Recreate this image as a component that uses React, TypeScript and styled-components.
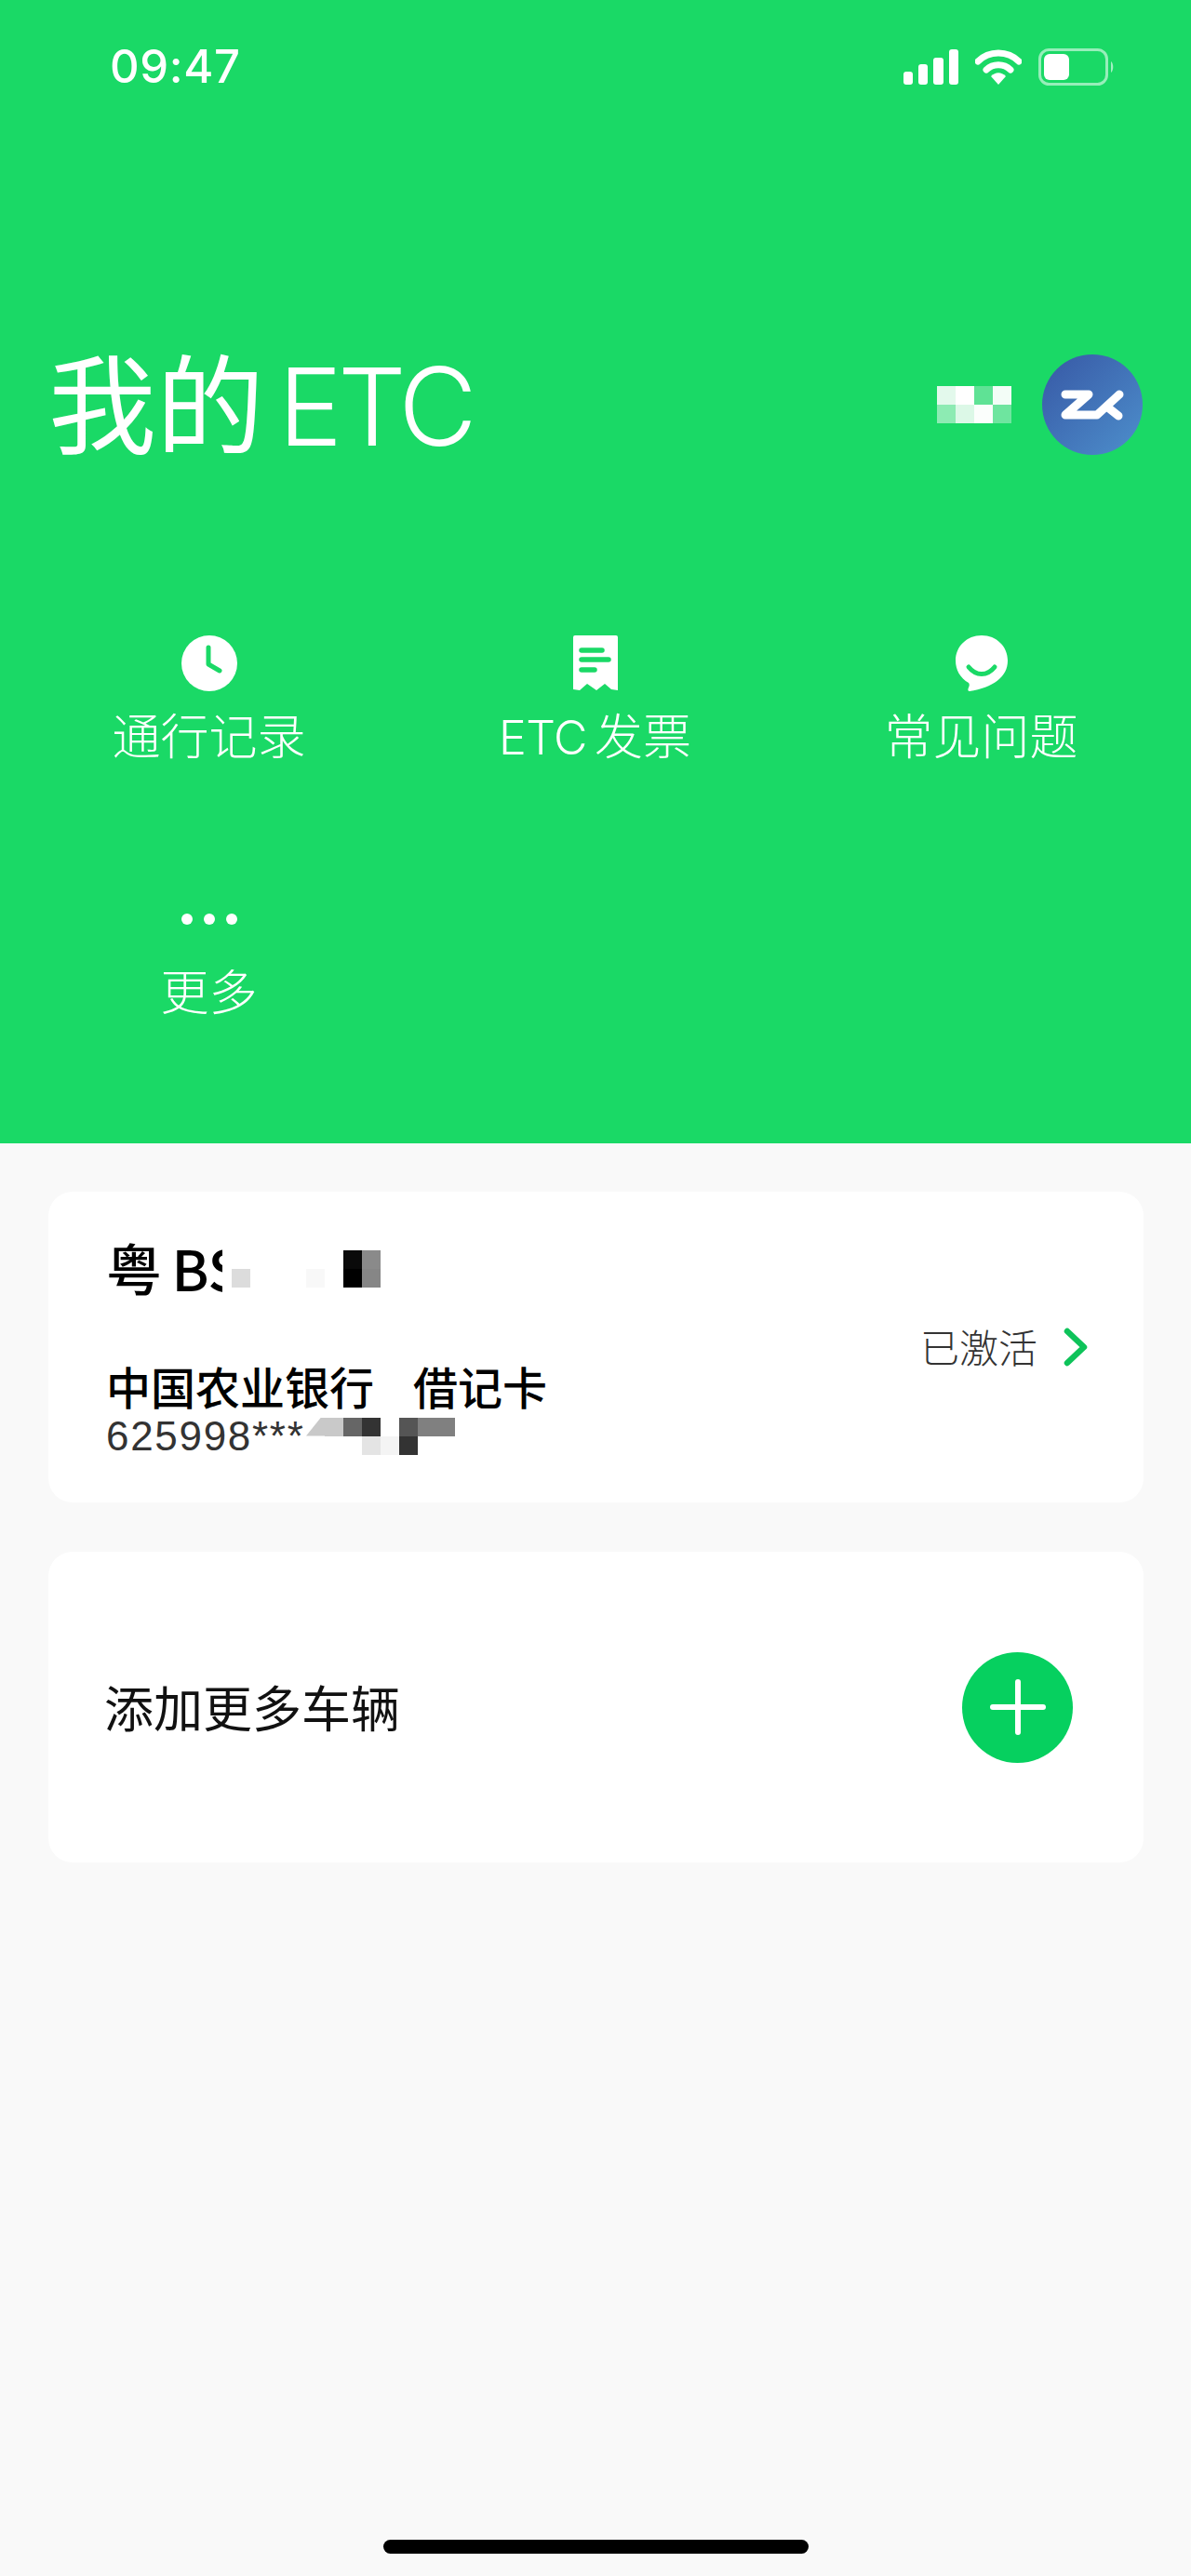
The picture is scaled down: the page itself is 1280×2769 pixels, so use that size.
import React from "react";
import styled, { createGlobalStyle } from "styled-components";

const CJK = `"Inter", "Noto Sans CJK SC", sans-serif`;

const GlobalStyle = createGlobalStyle`
  html, body {
    margin: 0;
    padding: 0;
    background: #f9f9f9;
    font-family: ${CJK};
  }
`;

const Page = styled.div`
  display: flex;
  flex-direction: column;
  min-height: 2769px;
  background: #f9f9f9;
`;

// 상단 초록 영역
const Header = styled.header`
  display: flex;
  flex-direction: column;
  box-sizing: border-box;
  height: 1229px;
  background: #1ad966;
  color: #fff;
`;

const StatusBar = styled.div`
  display: flex;
  justify-content: space-between;
  align-items: center;
  box-sizing: border-box;
  height: 40px;
  margin-top: 52px;
  padding: 0 82px 0 118px;
`;

const Time = styled.span`
  font-family: "Inter", sans-serif;
  font-size: 49px;
  font-weight: 500;
  line-height: 40px;
  letter-spacing: 0.6px;
`;

const StatusIcons = styled.div`
  display: flex;
  align-items: center;
  gap: 18px;
`;

const TitleRow = styled.div`
  display: flex;
  align-items: center;
  justify-content: space-between;
  height: 108px;
  margin-top: 289px;
  padding: 0 52px 0 52px;
`;

const Title = styled.h1`
  margin: 0;
  padding-bottom: 6px;
  font-family: "Noto Sans CJK SC", sans-serif;
  font-size: 116px;
  font-weight: 400;
  line-height: 108px;
  white-space: nowrap;
`;

const TitleLatin = styled.span`
  margin-left: 15px;
  font-family: "Inter", sans-serif;
  font-size: 116px;
  font-weight: 300;
  letter-spacing: -5px;
`;

const Account = styled.div`
  display: flex;
  align-items: center;
  gap: 33px;
`;

const Avatar = styled.div`
  display: flex;
  align-items: center;
  justify-content: center;
  width: 108px;
  height: 108px;
  border-radius: 50%;
  background: linear-gradient(135deg, #3758a5 0%, #4d8fcc 100%);
`;

const Menu = styled.nav`
  display: grid;
  grid-template-columns: repeat(3, 415px);
  row-gap: 133px;
  margin-top: 194px;
  padding-left: 17px;
`;

const MenuItem = styled.a`
  display: flex;
  flex-direction: column;
  align-items: center;
`;

const MenuIcon = styled.div`
  display: flex;
  align-items: center;
  justify-content: center;
  height: 60px;
`;

const MenuLabel = styled.span`
  height: 72px;
  margin-top: 10px;
  font-family: "Noto Sans CJK SC", sans-serif;
  font-size: 52px;
  font-weight: 300;
  line-height: 72px;
  white-space: nowrap;
`;

const MenuLatin = styled.span`
  margin-right: 8px;
  font-family: "Inter", sans-serif;
  font-size: 50px;
  font-weight: 300;
  letter-spacing: -0.5px;
`;

const Dots = styled.div`
  display: flex;
  gap: 12px;
`;

const Dot = styled.i`
  width: 12px;
  height: 12px;
  border-radius: 50%;
  background: #fff;
`;

// 카드 목록
const Main = styled.main`
  display: flex;
  flex: 1;
  flex-direction: column;
  gap: 53px;
  padding: 52px 51px 0 52px;
`;

const Card = styled.section`
  display: flex;
  align-items: center;
  justify-content: space-between;
  box-sizing: border-box;
  height: 334px;
  padding: 0 60px 0 62px;
  border-radius: 26px;
  background: #fff;
`;

const AddCard = styled(Card)`
  padding: 0 76px 0 60px;
`;

const CardInfo = styled.div`
  display: flex;
  flex-direction: column;
`;

const PlateRow = styled.div`
  display: flex;
  align-items: flex-start;
  gap: 10px;
`;

const PlateText = styled.div`
  width: 125px;
  height: 62px;
  overflow: hidden;
  font-family: "Noto Sans CJK SC", sans-serif;
  font-size: 60px;
  font-weight: 500;
  line-height: 58px;
  word-spacing: -3px;
  color: #000;
  white-space: nowrap;
`;

const BankLine = styled.div`
  display: flex;
  gap: 42px;
  margin-top: 66px;
  font-family: "Noto Sans CJK SC", sans-serif;
  font-size: 48px;
  font-weight: 500;
  line-height: 56px;
  color: #000;
`;

const NumberRow = styled.div`
  display: flex;
  margin-top: 7px;
`;

const CardNumber = styled.span`
  width: 215px;
  font-family: "Liberation Sans", sans-serif;
  font-size: 44px;
  line-height: 40px;
  letter-spacing: 1.7px;
  color: #333;
`;

const Status = styled.div`
  display: flex;
  align-items: center;
  gap: 28px;
`;

const StatusText = styled.span`
  padding-bottom: 3px;
  font-family: "Noto Sans CJK SC", sans-serif;
  font-size: 42px;
  font-weight: 300;
  line-height: 56px;
  color: #333;
`;

const AddText = styled.span`
  padding-bottom: 2px;
  font-family: "Noto Sans CJK SC", sans-serif;
  font-size: 53px;
  font-weight: 400;
  line-height: 64px;
  color: #111;
`;

const AddButton = styled.button`
  position: relative;
  width: 119px;
  height: 119px;
  padding: 0;
  border: 0;
  border-radius: 50%;
  background: #06d05f;

  &::before,
  &::after {
    content: "";
    position: absolute;
    left: 50%;
    top: 50%;
    background: #fff;
    border-radius: 3px;
    transform: translate(-50%, -50%);
  }
  &::before {
    width: 60px;
    height: 6px;
  }
  &::after {
    width: 6px;
    height: 60px;
  }
`;

const HomeBar = styled.div`
  align-self: center;
  width: 457px;
  height: 15px;
  margin: auto 0 24px;
  border-radius: 8px;
  background: #000;
`;

// 모자이크 가림 처리
const MosaicGrid = styled.div<{ $columns: number; $top?: number }>`
  display: grid;
  grid-template-columns: repeat(${(p) => p.$columns}, 20px);
  grid-auto-rows: 20px;
  margin-top: ${(p) => p.$top ?? 0}px;
`;

const MosaicCell = styled.i<{ $color: string; $cut?: boolean }>`
  background: ${(p) => p.$color};
  ${(p) => p.$cut && "clip-path: polygon(80% 0, 100% 0, 100% 100%, 0 100%);"}
`;

const Mosaic: React.FC<{ cells: string[]; columns: number; top?: number; cutFirst?: boolean }> = ({
  cells,
  columns,
  top,
  cutFirst,
}) => (
  <MosaicGrid $columns={columns} $top={top}>
    {cells.map((color, i) => (
      <MosaicCell key={i} $color={color} $cut={cutFirst && i === 0} />
    ))}
  </MosaicGrid>
);

const W = "#ffffff";
const NAME_CELLS = ["#e3f9ec", W, "#5fe295", "#f3fdf7", "#8debb3", "#dcf8e7", "#fbfefc", "#6ee59f"];
const PLATE_CELLS = [W, W, W, W, W, W, "#0a0a0a", "#8a8a8a", "#dcdcdc", W, W, W, "#f8f8f8", W, "#000000", "#868686"];
const NUMBER_CELLS = [
  "#c9c9c9", "#c9c9c9", "#666666", "#333333", W, "#555555", "#808080", "#808080",
  W, W, W, "#e4e4e4", "#f4f4f4", "#333333", W, W,
];

const SignalIcon = () => (
  <svg width="59" height="38" viewBox="0 0 59 38" fill="#fff">
    <rect x="0" y="24" width="10" height="14" rx="3" />
    <rect x="16" y="16" width="10" height="22" rx="3" />
    <rect x="32" y="9" width="11" height="29" rx="3" />
    <rect x="49" y="0" width="10" height="38" rx="3" />
  </svg>
);

const WifiIcon = () => (
  <svg width="50" height="38" viewBox="0 0 50 38" fill="none">
    <path d="M3 13 C15 1 35 1 47 13" stroke="#fff" strokeWidth="7" strokeLinecap="round" />
    <path d="M12 22 C19 15 31 15 38 22" stroke="#fff" strokeWidth="7" strokeLinecap="round" />
    <path d="M17 29 C22 24 28 24 33 29 L25 38 Z" fill="#fff" />
  </svg>
);

const BatteryIcon = () => (
  <svg width="82" height="40" viewBox="0 0 82 40" fill="none">
    <rect x="1.5" y="1.5" width="72" height="37" rx="10" stroke="#fff" strokeOpacity="0.55" strokeWidth="3" />
    <rect x="6" y="6" width="27" height="28" rx="6" fill="#fff" />
    <path d="M78 14 C81 16 81 24 78 26 Z" fill="#fff" fillOpacity="0.6" />
  </svg>
);

const ZkLogo = () => (
  <svg width="108" height="108" viewBox="0 0 108 108" fill="none">
    <path
      d="M25 43 H50 L25 65 H59 L83 43"
      stroke="#fff"
      strokeWidth="9"
      strokeLinecap="round"
      strokeLinejoin="round"
    />
    <path d="M72 58 L82 66" stroke="#fff" strokeWidth="9" strokeLinecap="round" />
  </svg>
);

const ClockIcon = () => (
  <svg width="60" height="60" viewBox="0 0 60 60">
    <circle cx="30" cy="30" r="30" fill="#fff" />
    <path
      d="M29 13 V31 L41 38"
      fill="none"
      stroke="#1ad966"
      strokeWidth="5"
      strokeLinecap="round"
      strokeLinejoin="round"
    />
  </svg>
);

const ReceiptIcon = () => (
  <svg width="48" height="60" viewBox="0 0 48 60">
    <path
      d="M2 0 H46 A2 2 0 0 1 48 2 V59 L41 58 L34 52 L25 59 L15 52 L7 59 L0 58 V2 A2 2 0 0 1 2 0 Z"
      fill="#fff"
    />
    <g stroke="#1ad966" strokeWidth="5.5" strokeLinecap="round">
      <path d="M9 16 H31" />
      <path d="M9 26 H38" />
      <path d="M9 37 H23" />
    </g>
  </svg>
);

const ChatIcon = () => (
  <svg width="56" height="60" viewBox="0 0 56 60">
    <path
      d="M28 0 C44 0 56 12 56 27 C56 45 40 56 15 60 C13 60 13 58 14 56 C15 54 15 52 14 51 C5 46 0 37 0 27 C0 12 12 0 28 0 Z"
      fill="#fff"
    />
    <path
      d="M14 34 C22 44 34 44 42 34"
      fill="none"
      stroke="#1ad966"
      strokeWidth="5"
      strokeLinecap="round"
    />
  </svg>
);

const ChevronIcon = () => (
  <svg width="26" height="42" viewBox="0 0 26 42" fill="none">
    <path
      d="M4 4 L22 21 L4 38"
      stroke="#0ec35a"
      strokeWidth="6.5"
      strokeLinecap="round"
      strokeLinejoin="round"
    />
  </svg>
);

const App: React.FC = () => {
  return (
    <Page>
      <GlobalStyle />
      <Header>
        <StatusBar>
          <Time>09:47</Time>
          <StatusIcons>
            <SignalIcon />
            <WifiIcon />
            <BatteryIcon />
          </StatusIcons>
        </StatusBar>

        <TitleRow>
          <Title>
            我的<TitleLatin>ETC</TitleLatin>
          </Title>
          <Account>
            <Mosaic cells={NAME_CELLS} columns={4} />
            <Avatar>
              <ZkLogo />
            </Avatar>
          </Account>
        </TitleRow>

        <Menu>
          <MenuItem>
            <MenuIcon>
              <ClockIcon />
            </MenuIcon>
            <MenuLabel>通行记录</MenuLabel>
          </MenuItem>
          <MenuItem>
            <MenuIcon>
              <ReceiptIcon />
            </MenuIcon>
            <MenuLabel>
              <MenuLatin>ETC</MenuLatin>发票
            </MenuLabel>
          </MenuItem>
          <MenuItem>
            <MenuIcon>
              <ChatIcon />
            </MenuIcon>
            <MenuLabel>常见问题</MenuLabel>
          </MenuItem>
          <MenuItem>
            <MenuIcon>
              <Dots>
                <Dot />
                <Dot />
                <Dot />
              </Dots>
            </MenuIcon>
            <MenuLabel>更多</MenuLabel>
          </MenuItem>
        </Menu>
      </Header>

      <Main>
        <Card>
          <CardInfo>
            <PlateRow>
              <PlateText>粤 BS</PlateText>
              <Mosaic cells={PLATE_CELLS} columns={8} top={11} />
            </PlateRow>
            <BankLine>
              <span>中国农业银行</span>
              <span>借记卡</span>
            </BankLine>
            <NumberRow>
              <CardNumber>625998***</CardNumber>
              <Mosaic cells={NUMBER_CELLS} columns={8} cutFirst />
            </NumberRow>
          </CardInfo>
          <Status>
            <StatusText>已激活</StatusText>
            <ChevronIcon />
          </Status>
        </Card>

        <AddCard>
          <AddText>添加更多车辆</AddText>
          <AddButton aria-label="添加" />
        </AddCard>
      </Main>

      <HomeBar />
    </Page>
  );
};

export default App;
